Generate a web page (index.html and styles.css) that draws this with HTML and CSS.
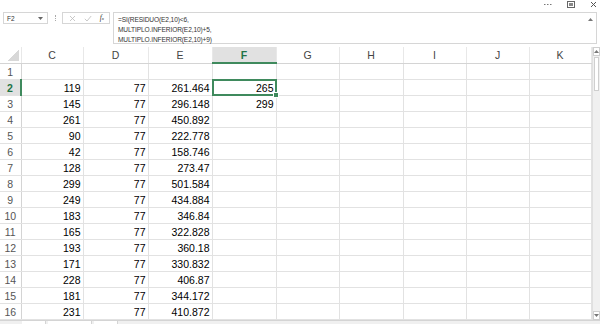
FILE: index.html
```html
<!DOCTYPE html>
<html lang="es">
<head>
    <meta charset="UTF-8">
    <title>Libro1 - Excel</title>
    <link rel="stylesheet" href="styles.css">
</head>
<body>
    <div class="titlebar">
        <svg class="ctl" width="8" height="6" viewBox="0 0 8 6"><rect x="0" y="3" width="1.5" height="1" fill="#777"/><rect x="3" y="3" width="1.5" height="1" fill="#777"/><rect x="6" y="3" width="1.5" height="1" fill="#777"/></svg>
        <svg class="ctl" width="8" height="7" viewBox="0 0 8 7"><rect x="0.5" y="0.5" width="7" height="6" fill="none" stroke="#666"/><rect x="2" y="2" width="4" height="3" fill="#888"/></svg>
        <svg class="ctl" width="7" height="7" viewBox="0 0 7 7"><path d="M1 1L6 6M6 1L1 6" stroke="#555" stroke-width="1"/></svg>
    </div>

    <div class="formula-row">
        <div class="namebox">
            <span>F2</span>
            <svg width="5" height="3" viewBox="0 0 5 3"><path d="M0 0H5L2.5 3Z" fill="#666"/></svg>
        </div>
        <div class="sep"><span></span></div>
        <div class="fxbox">
            <svg width="7" height="7" viewBox="0 0 7 7"><path d="M1 1L6 6M6 1L1 6" stroke="#bbb" stroke-width="0.8"/></svg>
            <svg width="8" height="7" viewBox="0 0 8 7"><path d="M0.8 3.8L3 6L7.2 1" fill="none" stroke="#bbb" stroke-width="0.8"/></svg>
            <span class="fx">f<span class="x">x</span></span>
        </div>
        <div class="formula">
            <div>=SI(RESIDUO(E2,10)&lt;6,</div>
            <div>MULTIPLO.INFERIOR(E2,10)+5,</div>
            <div>MULTIPLO.INFERIOR(E2,10)+9)</div>
            <svg class="collapse" width="5" height="3" viewBox="0 0 5 3"><path d="M0 3H5L2.5 0Z" fill="#777"/></svg>
        </div>
    </div>

    <div class="sheet">
        <table class="grid">
            <colgroup>
                <col style="width:21px"><col style="width:62px"><col style="width:65px"><col style="width:64px"><col style="width:64px">
                <col style="width:63px"><col style="width:64px"><col style="width:63px"><col style="width:63px"><col style="width:62px">
            </colgroup>
            <thead>
                <tr>
                    <th class="corner"></th><th>C</th><th>D</th><th>E</th><th class="active">F</th><th>G</th><th>H</th><th>I</th><th>J</th><th>K</th>
                </tr>
            </thead>
            <tbody>
                <tr><th>1</th><td></td><td></td><td></td><td></td><td></td><td></td><td></td><td></td><td></td></tr>
                <tr><th class="active">2</th><td>119</td><td>77</td><td>261.464</td><td class="sel">265</td><td></td><td></td><td></td><td></td><td></td></tr>
                <tr><th>3</th><td>145</td><td>77</td><td>296.148</td><td>299</td><td></td><td></td><td></td><td></td><td></td></tr>
                <tr><th>4</th><td>261</td><td>77</td><td>450.892</td><td></td><td></td><td></td><td></td><td></td><td></td></tr>
                <tr><th>5</th><td>90</td><td>77</td><td>222.778</td><td></td><td></td><td></td><td></td><td></td><td></td></tr>
                <tr><th>6</th><td>42</td><td>77</td><td>158.746</td><td></td><td></td><td></td><td></td><td></td><td></td></tr>
                <tr><th>7</th><td>128</td><td>77</td><td>273.47</td><td></td><td></td><td></td><td></td><td></td><td></td></tr>
                <tr><th>8</th><td>299</td><td>77</td><td>501.584</td><td></td><td></td><td></td><td></td><td></td><td></td></tr>
                <tr><th>9</th><td>249</td><td>77</td><td>434.884</td><td></td><td></td><td></td><td></td><td></td><td></td></tr>
                <tr><th>10</th><td>183</td><td>77</td><td>346.84</td><td></td><td></td><td></td><td></td><td></td><td></td></tr>
                <tr><th>11</th><td>165</td><td>77</td><td>322.828</td><td></td><td></td><td></td><td></td><td></td><td></td></tr>
                <tr><th>12</th><td>193</td><td>77</td><td>360.18</td><td></td><td></td><td></td><td></td><td></td><td></td></tr>
                <tr><th>13</th><td>171</td><td>77</td><td>330.832</td><td></td><td></td><td></td><td></td><td></td><td></td></tr>
                <tr><th>14</th><td>228</td><td>77</td><td>406.87</td><td></td><td></td><td></td><td></td><td></td><td></td></tr>
                <tr><th>15</th><td>181</td><td>77</td><td>344.172</td><td></td><td></td><td></td><td></td><td></td><td></td></tr>
                <tr><th>16</th><td>231</td><td>77</td><td>410.872</td><td></td><td></td><td></td><td></td><td></td><td></td></tr>
            </tbody>
        </table>

        <div class="vscroll">
            <div class="arrow"><svg width="5" height="3" viewBox="0 0 5 3"><path d="M0 3H5L2.5 0Z" fill="#777"/></svg></div>
            <div class="thumb"></div>
            <div class="track"></div>
            <div class="arrow"><svg width="5" height="3" viewBox="0 0 5 3"><path d="M0 0H5L2.5 3Z" fill="#777"/></svg></div>
        </div>
    </div>

    <div class="tabs">
        <span class="tab"></span><span class="tab wide"></span><span class="tab"></span>
    </div>
</body>
</html>
```

FILE: styles.css
```css
* {
    box-sizing: border-box;
    margin: 0;
    padding: 0;
}

body {
    width: 600px;
    height: 324px;
    overflow: hidden;
    background: #fff;
    font-family: 'Liberation Sans', Arial, sans-serif;
    color: #000;
}

/* barra superior */
.titlebar {
    height: 11px;
    display: flex;
    justify-content: flex-end;
    align-items: flex-start;
    gap: 15px;
    padding: 1px 3px 0 0;
}

.ctl {
    display: block;
}

/* barra de fórmulas */
.formula-row {
    display: flex;
    align-items: flex-start;
    height: 33px;
    margin-top: 1px;
    padding-left: 3px;
}

.namebox {
    width: 45px;
    height: 12px;
    border: 1px solid #d6d6d6;
    display: flex;
    align-items: center;
    justify-content: space-between;
    padding: 0 4px 0 3px;
    font-size: 6.5px;
    color: #333;
}

.sep {
    width: 14px;
    height: 12px;
    display: flex;
    justify-content: center;
    align-items: center;
}

.sep span {
    width: 1px;
    height: 6px;
    border-left: 1px dotted #aaa;
}

.fxbox {
    width: 48px;
    height: 12px;
    border: 1px solid #d6d6d6;
    display: flex;
    align-items: center;
    justify-content: space-between;
    padding: 0 5px 0 6px;
}

.fxbox svg {
    display: block;
}

.fx {
    font-family: 'Liberation Serif', serif;
    font-style: italic;
    font-size: 7.5px;
    color: #333;
    line-height: 1;
}

.fx .x {
    font-size: 5px;
}

.formula {
    position: relative;
    flex: 1;
    height: 32px;
    margin: 0 3px 0 3px;
    border: 1px solid #d6d6d6;
    padding: 2px 4px 0;
    font-size: 6.6px;
    line-height: 10px;
    letter-spacing: -0.12px;
    color: #333;
}

.collapse {
    position: absolute;
    top: 5px;
    right: 3px;
}

/* hoja */
.sheet {
    display: flex;
    margin-top: 2px;
}

.grid {
    width: 591px;
    table-layout: fixed;
    border-collapse: collapse;
    font-size: 10.5px;
}

.grid th,
.grid td {
    height: 16px;
    padding: 1px 2px 0 0;
    border: 1px solid #e2e2e2;
    white-space: nowrap;
    overflow: hidden;
}

.grid tr:first-child th,
.grid tr:first-child td {
    border-top: none;
}

.grid td {
    text-align: right;
}

.grid th {
    font-weight: normal;
    color: #444;
    text-align: center;
    padding: 1px 0 0;
}

.grid thead th {
    border-bottom: 1px solid #d4d4d4;
    border-left: 1px solid #e8e8e8;
    border-right: 1px solid #e8e8e8;
}

.grid tbody th {
    border-right: 1px solid #d4d4d4;
    border-left: none;
    color: #555;
}

.grid th.corner {
    border-left: none;
    background: linear-gradient(to bottom right, transparent 50%, #d8d8d8 50%) no-repeat right 2px bottom 2px / 11px 11px;
}

.grid thead th.active {
    background: #e1e1e1;
    color: #217346;
    font-weight: bold;
    border-bottom: 2px solid #3f8a5d;
}

.grid tbody th.active {
    background: #e1e1e1;
    color: #217346;
    font-weight: bold;
    border-right: 2px solid #3f8a5d;
}

.grid td.sel {
    position: relative;
    overflow: visible;
}

.grid td.sel::after {
    content: "";
    position: absolute;
    inset: -1px;
    border: 2px solid #3f8a5d;
}

.grid td.sel::before {
    content: "";
    position: absolute;
    right: -3px;
    bottom: -3px;
    width: 4px;
    height: 4px;
    background: #3f8a5d;
    border: 1px solid #fff;
    z-index: 1;
}

/* barra de desplazamiento */
.vscroll {
    width: 9px;
    display: flex;
    flex-direction: column;
    background: #f0f0f0;
    border-left: 1px solid #e0e0e0;
}

.vscroll .arrow {
    height: 9px;
    display: flex;
    justify-content: center;
    align-items: center;
    background: #fff;
    border: 1px solid #cfcfcf;
}

.vscroll .thumb {
    height: 34px;
    margin: 1px 1px 0;
    background: #fff;
    border: 1px solid #cfcfcf;
}

.vscroll .track {
    flex: 1;
}

/* pestañas inferiores */
.tabs {
    display: flex;
    gap: 2px;
    height: 6px;
    background: #f0f0f0;
    border-top: 1px solid #d4d4d4;
    padding-left: 22px;
}

.tab {
    width: 24px;
    background: #fff;
    border-right: 1px solid #d4d4d4;
}

.tab.wide {
    width: 44px;
}
```
